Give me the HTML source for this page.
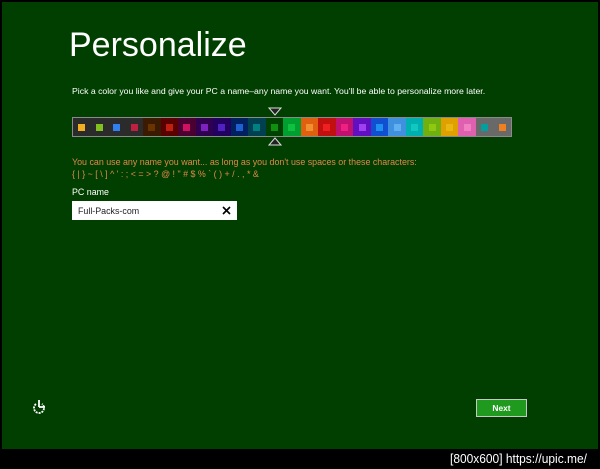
<!DOCTYPE html>
<html><head><meta charset="utf-8"><style>
body{margin:0;width:600px;height:469px;background:#000;position:relative;overflow:hidden;font-family:"Liberation Sans",sans-serif}
#g{position:absolute;left:2px;top:2px;width:596px;height:447px;background:#013f01}
.t{position:absolute;color:#fff;white-space:nowrap}
#bar{position:absolute;left:72px;top:117px;width:440px;height:20px;border:1px solid #8a8a8a;box-sizing:border-box;display:flex}
#bar div{flex:1;position:relative}
#bar div i{position:absolute;left:50%;top:50%;width:7px;height:7px;margin:-3.5px 0 0 -3.5px}
#wm{position:absolute;left:450px;top:451px;color:#fff;font:13px "Liberation Sans Narrow","Liberation Sans",sans-serif;transform:scaleX(0.92);transform-origin:left}
</style></head><body>
<div id="g"></div>
<div class="t" style="left:69px;top:26px;font-size:34px;font-weight:300">Personalize</div>
<div class="t" style="left:72px;top:86px;font-size:8.7px">Pick a color you like and give your PC a name–any name you want. You'll be able to personalize more later.</div>
<svg style="position:absolute;left:268px;top:107px" width="14" height="9"><path d="M1 1H13L7 8Z" fill="#222" stroke="#ddd" stroke-width="1"/></svg>
<div id="bar">
<div style="background:#2b2b2b"><i style="background:#f0b020"></i></div>
<div style="background:#2b2b2b"><i style="background:#80c020"></i></div>
<div style="background:#2b2b2b"><i style="background:#3080f0"></i></div>
<div style="background:#2b2b2b"><i style="background:#c02040"></i></div>
<div style="background:#3a1a00"><i style="background:#6a3300"></i></div>
<div style="background:#5a0000"><i style="background:#c02010"></i></div>
<div style="background:#4a0030"><i style="background:#d01060"></i></div>
<div style="background:#300050"><i style="background:#8020c0"></i></div>
<div style="background:#220060"><i style="background:#5020c0"></i></div>
<div style="background:#002060"><i style="background:#2060d0"></i></div>
<div style="background:#004050"><i style="background:#008080"></i></div>
<div style="background:#004000"><i style="background:#109010"></i></div>
<div style="background:#00a030"><i style="background:#10c040"></i></div>
<div style="background:#e06010"><i style="background:#f09030"></i></div>
<div style="background:#c01010"><i style="background:#f02020"></i></div>
<div style="background:#c01070"><i style="background:#f02080"></i></div>
<div style="background:#6010c0"><i style="background:#a040f0"></i></div>
<div style="background:#1050d0"><i style="background:#2090f0"></i></div>
<div style="background:#4090e0"><i style="background:#60b0f0"></i></div>
<div style="background:#00b0b0"><i style="background:#10c8c0"></i></div>
<div style="background:#70b010"><i style="background:#90c810"></i></div>
<div style="background:#e0a000"><i style="background:#e8b810"></i></div>
<div style="background:#e060b0"><i style="background:#f080c0"></i></div>
<div style="background:#696969"><i style="background:#00a0a0"></i></div>
<div style="background:#696969"><i style="background:#f08020"></i></div>
</div>
<svg style="position:absolute;left:268px;top:137px" width="14" height="9"><path d="M1 8H13L7 1Z" fill="#222" stroke="#ddd" stroke-width="1"/></svg>
<div class="t" style="left:72px;top:157px;font-size:8.9px;color:#e0884a">You can use any name you want... as long as you don't use spaces or these characters:</div>
<div class="t" style="left:72px;top:169px;font-size:8.9px;color:#e0884a">{ | } ~ [ \ ] ^ ' : ; &lt; = &gt; ? @ ! " # $ % ` ( ) + / . , * &amp;</div>
<div class="t" style="left:72px;top:187px;font-size:8.9px">PC name</div>
<div style="position:absolute;left:72px;top:201px;width:165px;height:19px;background:#fff"></div>
<div class="t" style="left:78px;top:206px;font-size:8.9px;color:#222">Full-Packs-com</div>
<svg style="position:absolute;left:222px;top:206px" width="9" height="9"><path d="M1 1L8 8M8 1L1 8" stroke="#000" stroke-width="1.6"/></svg>
<svg style="position:absolute;left:31px;top:399px" width="16" height="16"><path d="M5 5A5 5 0 1 0 11 5" fill="none" stroke="#fff" stroke-width="1.8" stroke-dasharray="2 1"/><path d="M8 1V8M8 8H14" stroke="#fff" stroke-width="1.8"/></svg>
<div style="position:absolute;left:476px;top:399px;width:51px;height:18px;box-sizing:border-box;border:1px solid #c8c8c8;background:#1f9a1f;color:#fff;font-size:8.4px;font-weight:bold;text-align:center;line-height:16px">Next</div>
<div id="wm">[800x600] https://upic.me/</div>
</body></html>
